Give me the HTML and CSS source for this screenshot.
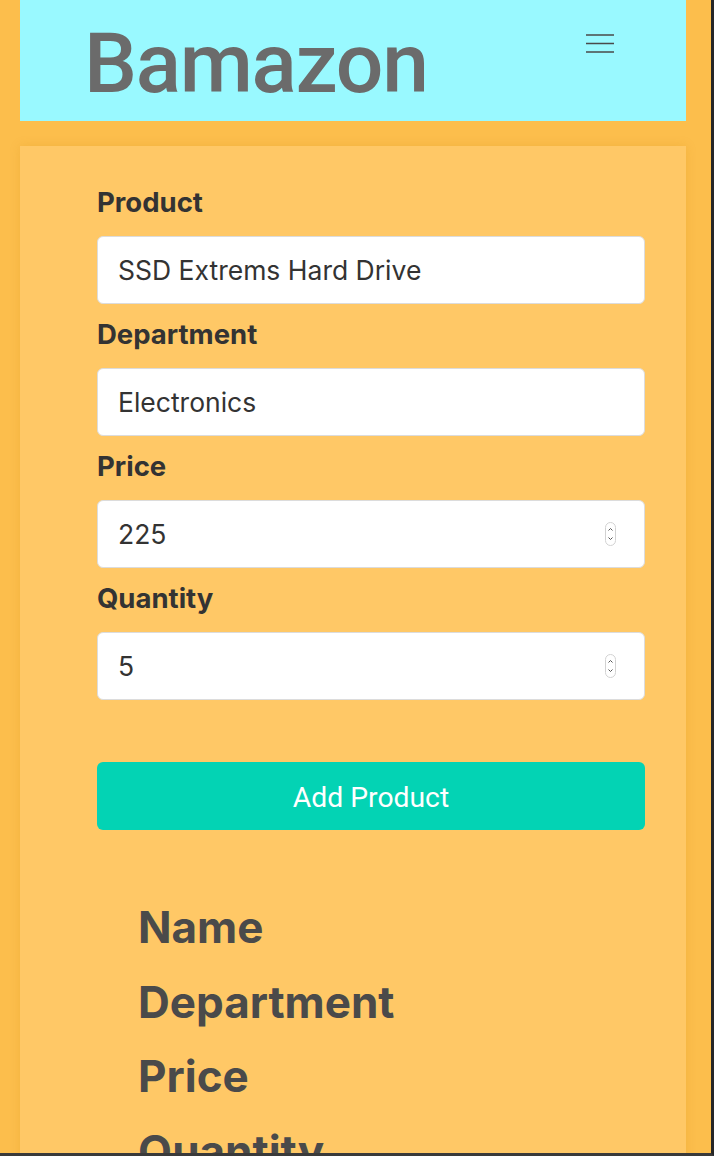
FILE: index.html
```html
<!DOCTYPE html>
<html lang="en">
<head>
<meta charset="utf-8">
<title>Bamazon</title>
<link rel="stylesheet" href="styles.css">
</head>
<body>
<div class="page">
  <header class="topbar">
    <h1 class="brand">Bamazon</h1>
    <button class="menu" aria-label="Menu">
      <svg width="28" height="20" viewBox="0 0 28 20"><path d="M0 1h28M0 9.5h28M0 18h28" stroke="#4a4a4a" stroke-width="1.6" fill="none"/></svg>
    </button>
  </header>
  <main class="card">
    <form class="form">
      <label class="label">Product</label>
      <div class="field"><input class="input" type="text" value="SSD Extrems Hard Drive"></div>
      <label class="label">Department</label>
      <div class="field"><input class="input" type="text" value="Electronics"></div>
      <label class="label">Price</label>
      <div class="field"><input class="input" type="text" value="225">
        <svg class="spin" width="11" height="24" viewBox="0 0 11 24"><rect x="0.5" y="0.5" width="10" height="23" rx="5" fill="#fff" stroke="#d2d2d2"/><path d="M3.5 8.5l2-2 2 2M3.5 15.5l2 2 2-2" stroke="#555" stroke-width="1" fill="none"/></svg>
      </div>
      <label class="label">Quantity</label>
      <div class="field"><input class="input" type="text" value="5">
        <svg class="spin" width="11" height="24" viewBox="0 0 11 24"><rect x="0.5" y="0.5" width="10" height="23" rx="5" fill="#fff" stroke="#d2d2d2"/><path d="M3.5 8.5l2-2 2 2M3.5 15.5l2 2 2-2" stroke="#555" stroke-width="1" fill="none"/></svg>
      </div>
      <button type="button" class="add">Add Product</button>
    </form>
    <ul class="cols">
      <li>Name</li>
      <li>Department</li>
      <li>Price</li>
      <li>Quantity</li>
    </ul>
  </main>
</div>
<div class="frame"></div>
</body>
</html>
```
FILE: styles.css
```css
html, body {
  margin: 0;
  padding: 0;
}
body {
  background: #fcbe4c;
  font-family: Inter, "Noto Sans", sans-serif;
  color: #333;
}
.page {
  width: 666px;
  margin-left: 20px;
}
.topbar {
  height: 121px;
  background: #99f9ff;
  display: flex;
  justify-content: space-between;
  align-items: flex-start;
  padding: 0 72px 0 64px;
  box-sizing: border-box;
}
.brand {
  margin: 22px 0 0 0;
  font-family: Roboto, "Liberation Sans", sans-serif;
  font-weight: 500;
  font-size: 84px;
  line-height: 84px;
  color: #6b6b6b;
  letter-spacing: -1.3px;
}
.menu {
  margin-top: 34px;
  padding: 0;
  border: 0;
  background: none;
  display: flex;
}
.card {
  margin-top: 25px;
  background: #ffc866;
  box-shadow: 0 0 10px rgba(200, 130, 0, 0.18);
  padding: 41px 41px 40px 77px;
  min-height: 1100px;
}
.form {
  display: flex;
  flex-direction: column;
}
.label {
  font-size: 27.5px;
  font-weight: 700;
  line-height: 30px;
  color: #333;
  margin-bottom: 19px;
}
.field {
  display: flex;
  align-items: center;
  height: 68px;
  box-sizing: border-box;
  background: #fff;
  border: 1px solid #dcdcdc;
  border-radius: 6px;
  padding: 0 28px 0 20px;
  margin-bottom: 15px;
}
.input {
  flex: 1;
  min-width: 0;
  border: 0;
  outline: none;
  background: transparent;
  padding: 0;
  font-family: Inter, "Noto Sans", sans-serif;
  font-size: 26.5px;
  color: #333;
}
.spin {
  flex: none;
}
.add {
  margin-top: 47px;
  height: 68px;
  border: 0;
  border-radius: 6px;
  background: #03d3b4;
  color: #fff;
  font-family: Roboto, "Liberation Sans", sans-serif;
  font-size: 28.3px;
  font-weight: 400;
  padding-top: 3px;
}
.cols {
  list-style: none;
  margin: 60px 0 0 41px;
  padding: 0;
}
.cols li {
  font-size: 44px;
  font-weight: 700;
  line-height: 74.5px;
  color: #4a4a4a;
}
.frame {
  position: fixed;
  inset: 0;
  border-right: 3px solid #262626;
  border-bottom: 3px solid #3a3a3a;
  pointer-events: none;
}
```
